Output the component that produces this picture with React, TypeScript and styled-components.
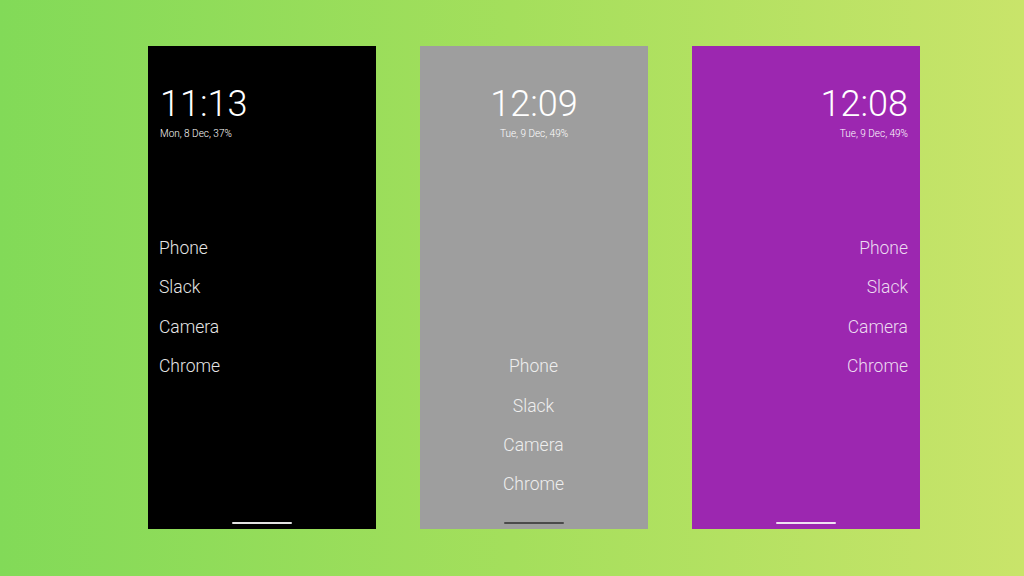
import React from "react";
import styled, { createGlobalStyle } from "styled-components";

type Align = "left" | "center" | "right";

interface PhoneI {
  id: string;
  time: string;
  date: string;
  bg: string;
  text: string;
  label: string;
  bar: string;
  align: Align;
  listAt: "top" | "bottom";
}

const apps = ["Phone", "Slack", "Camera", "Chrome"];

const phones: PhoneI[] = [
  {
    id: "black",
    time: "11:13",
    date: "Mon, 8 Dec, 37%",
    bg: "#000000",
    text: "#ffffff",
    label: "#e6e6e6",
    bar: "#e2e2e2",
    align: "left",
    listAt: "top",
  },
  {
    id: "gray",
    time: "12:09",
    date: "Tue, 9 Dec, 49%",
    bg: "#9e9e9e",
    text: "#ffffff",
    label: "#eeeeee",
    bar: "#4a4a4a",
    align: "center",
    listAt: "bottom",
  },
  {
    id: "purple",
    time: "12:08",
    date: "Tue, 9 Dec, 49%",
    bg: "#9c27b0",
    text: "#ffffff",
    label: "#ecdcf0",
    bar: "#f0e2f4",
    align: "right",
    listAt: "top",
  },
];

const GlobalStyle = createGlobalStyle`
  html, body {
    margin: 0;
    padding: 0;
  }
  body {
    font-family: Roboto, "Noto Sans", sans-serif;
  }
`;

const App: React.FC = () => {
  return (
    <>
      <GlobalStyle />
      <Stage>
        {phones.map((p) => (
          <Phone key={p.id} $bg={p.bg} $align={p.align}>
            <Clock $color={p.text}>{p.time}</Clock>
            <DateLine $color={p.text}>{p.date}</DateLine>
            <AppList $at={p.listAt}>
              {apps.map((name) => (
                <AppItem key={name} $color={p.label}>
                  {name}
                </AppItem>
              ))}
            </AppList>
            <HomeBar $color={p.bar} />
          </Phone>
        ))}
      </Stage>
    </>
  );
};

const Stage = styled.div`
  display: flex;
  gap: 44px;
  box-sizing: border-box;
  width: 1024px;
  height: 576px;
  padding: 46px 0 0 148px;
  background: linear-gradient(90deg, #82da58 0%, #a4df5c 50%, #c9e46a 100%);
`;

const Phone = styled.div<{ $bg: string; $align: Align }>`
  display: flex;
  flex-direction: column;
  box-sizing: border-box;
  width: 228px;
  height: 483px;
  padding: 40px 12px 5px;
  background-color: ${({ $bg }) => $bg};
  text-align: ${({ $align }) => $align};
`;

const Clock = styled.div<{ $color: string }>`
  color: ${({ $color }) => $color};
  font-size: 36px;
  font-weight: 300;
  line-height: 1;
`;

const DateLine = styled.div<{ $color: string }>`
  margin-top: 7px;
  color: ${({ $color }) => $color};
  font-size: 10px;
  font-weight: 300;
  line-height: 1;
`;

const AppList = styled.div<{ $at: "top" | "bottom" }>`
  display: flex;
  flex-direction: column;
  margin-top: ${({ $at }) => ($at === "top" ? "90px" : "auto")};
  margin-bottom: ${({ $at }) => ($at === "top" ? "auto" : "17px")};
`;

const AppItem = styled.div<{ $color: string }>`
  margin-left: -1px;
  color: ${({ $color }) => $color};
  font-size: 17.5px;
  font-weight: 300;
  line-height: 39.3px;
`;

const HomeBar = styled.div<{ $color: string }>`
  align-self: center;
  width: 60px;
  height: 2.5px;
  border-radius: 2px;
  background-color: ${({ $color }) => $color};
`;

export default App;
